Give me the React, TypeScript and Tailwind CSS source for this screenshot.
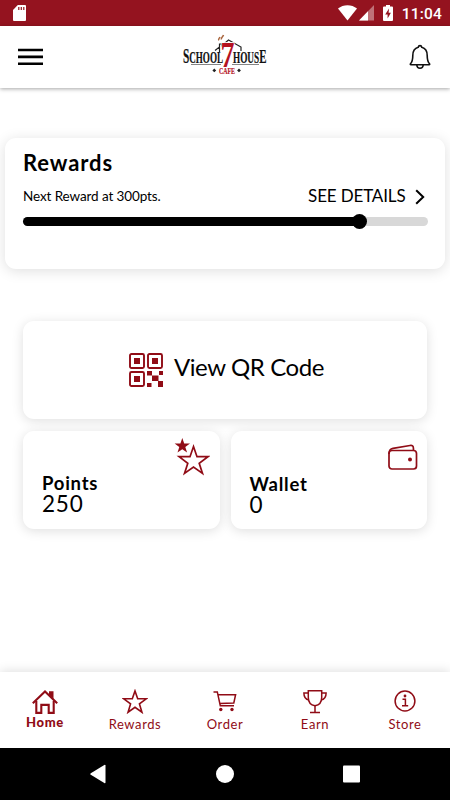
import React from 'react';
import { clsx } from 'clsx';

const STAR = 'M12 1.8 14.5 9H22.4L16.1 13.7 18.4 21.4 12 16.8 5.6 21.4 7.9 13.7 1.6 9H9.5Z';

function StatusBar() {
  return (
    <div className="flex h-[26px] shrink-0 items-center bg-[#94131f] pl-[13px] pr-[8px] text-white">
      <svg width="13" height="16" viewBox="0 0 13 16" fill="none">
        <path d="M4.8 0H12a1 1 0 0 1 1 1v14a1 1 0 0 1-1 1H1a1 1 0 0 1-1-1V5Z" fill="#fff" />
        <path d="M5.8 2v3M8.3 2v3M10.8 2v3" stroke="#94131f" strokeWidth="1.2" />
      </svg>
      <svg className="ml-auto" width="19" height="16" viewBox="0 0 19 16" fill="#fff">
        <path d="M0 3.6C5.2-1 13.8-1 19 3.6L9.5 15.5Z" />
      </svg>
      <svg className="ml-[2px]" width="15" height="16" viewBox="0 0 15 16">
        <path d="M15 0V15.5H0Z" fill="#fff" opacity="0.4" />
        <path d="M9 6.2V15.5H0Z" fill="#fff" />
      </svg>
      <svg className="ml-[9px]" width="10" height="16" viewBox="0 0 10 16">
        <path d="M3 0h4v1.600h2a1 1 0 0 1 1 1V15a1 1 0 0 1-1 1H1a1 1 0 0 1-1-1V2.600a1 1 0 0 1 1-1h2Z" fill="#fff" />
        <path d="M6 3.5 2.2 9.4H4.6V13.5L7.9 7.8H5.6Z" fill="#94131f" />
      </svg>
      <span className="ml-[9px] mt-[3px] font-[Roboto] text-[15.5px] font-medium leading-none tracking-[0.2px]">11:04</span>
    </div>
  );
}

function Logo() {
  return (
    <svg width="86" height="42" viewBox="0 0 86 42" fill="none" fontFamily="'Liberation Serif', serif" fontWeight="700">
      <path d="M33 16.5 37.5 13V10H40V11.5L46.5 6 59 13V17M37.5 13V18" stroke="#222" strokeWidth="1.2" />
      <path d="M39.5 5.5C38.5 3.8 41 3 41.5 1M36.8 6.3C36 4.8 37.5 4.3 38 3" stroke="#a8643c" strokeWidth="1.5" />
      <path d="M9 30.5H39M50 30.5H77" stroke="#777" strokeWidth="0.9" />
      <text x="1" y="29" fontSize="16" fill="#111" stroke="#111" strokeWidth="0.2" textLength="40" lengthAdjust="spacingAndGlyphs">
        <tspan fontSize="20">S</tspan>CHOOL
      </text>
      <text x="51" y="29" fontSize="16" fill="#111" stroke="#111" strokeWidth="0.2" textLength="33.5" lengthAdjust="spacingAndGlyphs">
        HOUS<tspan fontSize="19">E</tspan>
      </text>
      <text x="38.5" y="33.300" fontSize="35" fill="#b5121f" stroke="#fff" strokeWidth="1.6" paintOrder="stroke" textLength="14" lengthAdjust="spacingAndGlyphs">7</text>
      <text x="37" y="39.500" fontSize="9" fill="#b5121f" stroke="#b5121f" strokeWidth="0.2" textLength="16" lengthAdjust="spacingAndGlyphs">CAFE</text>
      <path d="m32.3 34.5 1.9 1.9-1.9 1.9-1.9-1.9ZM57 34.500l1.900 1.900-1.900 1.900-1.900-1.900Z" fill="#222" />
    </svg>
  );
}

function Header() {
  return (
    <header className="flex h-[62px] shrink-0 items-center justify-between bg-white pl-[18px] pr-[19px] shadow-[0_1px_4px_rgba(0,0,0,0.35)]">
      <svg width="25" height="18" viewBox="0 0 25 18" fill="#000">
        <path d="M0 .7h25v2.600H0zM0 7.600h25v2.600H0zM0 14.500h25v2.600H0z" />
      </svg>
      <div className="mt-[-4px] pr-[2px]">
        <Logo />
      </div>
      <svg width="22" height="26" viewBox="0 0 22 26" fill="none" stroke="#111" strokeWidth="1.6">
        <path d="M1.500 19.800c2-2 2.300-3.800 2.300-8.300 0-4.300 2-7.300 5.400-8.200.2-1 .8-1.700 1.800-1.700s1.600.7 1.800 1.700c3.400.9 5.400 3.900 5.400 8.200 0 4.500.3 6.300 2.300 8.300.4.500.2 1-.4 1H1.900c-.6 0-.8-.5-.4-1Z" />
        <path d="M7.800 21c.2 2.200 1.500 3.300 3.200 3.300s3-1.100 3.200-3.300" />
      </svg>
    </header>
  );
}

function RewardsCard() {
  return (
    <section className="mx-[5px] mt-[50px] h-[131px] rounded-[11px] bg-white pl-[18px] pr-[17.5px] pt-[12px] shadow-[0_2px_14px_rgba(0,0,0,0.13)]">
      <h2 className="text-[22px] font-bold leading-[25px] tracking-[0.9px]">Rewards</h2>
      <div className="mt-[10px] flex h-[22px] items-center justify-between">
        <span className="text-[13.5px] leading-[22px] tracking-[-0.1px]">Next Reward at 300pts.</span>
        <button className="flex items-center gap-[9px] text-[17px] leading-[22px] tracking-[-0.15px]">
          SEE DETAILS
          <svg className="mr-[3px] mt-[2px]" width="10" height="16" viewBox="0 0 10 16" fill="none" stroke="#000" strokeWidth="2">
            <path d="M1.200 1.200 8.200 8 1.200 14.800" />
          </svg>
        </button>
      </div>
      <div className="mt-[10px] flex h-[9px] items-center rounded-full bg-[#d8d8d8]">
        <div className="h-[9px] w-[337px] rounded-full bg-black" />
        <div className="-ml-[8px] size-[15px] rounded-full bg-black" />
      </div>
    </section>
  );
}

function QrIcon() {
  return (
    <svg width="34" height="34" viewBox="0 0 34 34" fill="none">
      <g stroke="#900c16" strokeWidth="1.9">
        <rect x="1" y="1" width="14" height="14" rx="1.5" />
        <rect x="19" y="1" width="14" height="14" rx="1.5" />
        <rect x="1" y="19" width="14" height="14" rx="1.5" />
      </g>
      <path d="M5 5h6v6H5zM23 5h6v6h-6zM5 23h6v6H5zM18 18h5v4.500h-5zM30 18h4v4h-4zM23 22.500h6.500V28H23zM18 30h4.500v4H18zM29 28h5v6h-5z" fill="#900c16" />
    </svg>
  );
}

interface StatCardProps {
  label: string;
  value: string;
  icon: React.ReactNode;
  className?: string;
}

function StatCard({ label, value, icon, className }: StatCardProps) {
  return (
    <div className="relative flex h-[98px] flex-1 flex-col rounded-[11px] bg-white pl-[19px] shadow-[0_2px_12px_rgba(0,0,0,0.13)]">
      <div className="absolute right-[10px] top-[7px]">{icon}</div>
      <div className={clsx('flex flex-col', className)}>
        <span className="text-[18.5px] font-bold leading-[21px] tracking-[0.75px]">{label}</span>
        <span className="-mt-px text-[22.5px] leading-[21px] tracking-[0.8px]">{value}</span>
      </div>
    </div>
  );
}

const pointsIcon = (
  <svg width="36" height="38" viewBox="0 0 36 38" fill="none">
    <path d="M8.300 0 10.200 5.600H16L11.300 9 13.100 14.600 8.300 11.200 3.500 14.600 5.300 9 .6 5.600H6.400Z" fill="#900c16" />
    <path d="M19.500 8.500 23 18.700H33.900L25.200 25.200 28.500 35.400 19.500 29.100 10.500 35.400 13.800 25.200 5.100 18.700H16Z" stroke="#900c16" strokeWidth="1.7" />
  </svg>
);

const walletIcon = (
  <svg className="-mr-px mt-[5px]" width="30" height="28" viewBox="0 0 30 28" fill="none" stroke="#900c16" strokeWidth="1.7">
    <rect x="1" y="7.500" width="27.500" height="18.500" rx="3" />
    <path d="M1 11C1 7 2 5.800 5 5.300L22 2.500c2.500-.3 3.200.5 3.400 2.500L25.500 7.500" />
    <circle cx="22" cy="16.500" r="2" fill="#900c16" stroke="none" />
  </svg>
);

const tabs = [
  {
    id: 'home',
    label: 'Home',
    icon: (
      <svg width="26" height="24" viewBox="0 0 26 24" fill="none" stroke="#900c16" strokeWidth="2.1">
        <path d="M.8 13.200 13 1.500 25.200 13.200" />
        <path d="M4.300 11V22.900H9.300V14.900H16.700V22.900H21.700V11" />
        <path d="M17 1.200h4.500V9L17 4.700Z" fill="#900c16" stroke="none" />
      </svg>
    ),
  },
  {
    id: 'rewards',
    label: 'Rewards',
    icon: (
      <svg className="-mt-[2px]" width="26" height="25" viewBox="0 0 24 23" fill="none" stroke="#900c16" strokeWidth="1.5">
        <path d={STAR} />
      </svg>
    ),
  },
  {
    id: 'order',
    label: 'Order',
    icon: (
      <svg className="-mt-[2px]" width="24" height="22" viewBox="0 0 24 22" fill="none" stroke="#900c16" strokeWidth="1.5">
        <path d="M.5 1.900H4.300L7.300 15.700H21M5 4.700H22.600L20.800 13 6.800 13.500" />
        <circle cx="7.800" cy="19.500" r="1.700" fill="#900c16" stroke="none" />
        <circle cx="19" cy="19.500" r="1.700" fill="#900c16" stroke="none" />
      </svg>
    ),
  },
  {
    id: 'earn',
    label: 'Earn',
    icon: (
      <svg className="-mt-[2px]" width="24" height="25" viewBox="0 0 24 25" fill="none" stroke="#900c16" strokeWidth="1.5">
        <path d="M5.300 1.700H18.700V8.500C18.700 13.500 15.500 16.200 12 16.800 8.500 16.200 5.300 13.500 5.300 8.500Z" />
        <path d="M5.300 4H.9C.9 8.500 2.500 10.500 6 11M18.700 4H23.100C23.100 8.500 21.500 10.500 18 11M12 16.800V23.300M7 23.500H17" />
      </svg>
    ),
  },
  {
    id: 'store',
    label: 'Store',
    icon: (
      <svg className="-mt-[2px]" width="22" height="22" viewBox="0 0 22 22" fill="none" stroke="#900c16" strokeWidth="1.5">
        <circle cx="11" cy="11" r="9.900" />
        <path d="M8.500 9.300H11.400V15.500M8 15.700H14.200" />
        <circle cx="11" cy="6" r="1.400" fill="#900c16" stroke="none" />
      </svg>
    ),
  },
];

function TabBar({ activeTab }: { activeTab: string }) {
  return (
    <nav className="grid h-[76px] shrink-0 grid-cols-5 bg-white shadow-[0_-1px_10px_rgba(0,0,0,0.13)]">
      {tabs.map((tab) => (
        <button key={tab.id} className="flex flex-col items-center pt-[17px] text-[#900c16]">
          <span className="flex h-[26px] items-center">{tab.icon}</span>
          <span
            className={clsx(
              'text-[13px] leading-[16px]',
              activeTab === tab.id ? '-mt-px font-black tracking-[0.7px]' : 'mt-px tracking-[0.6px]'
            )}
          >
            {tab.label}
          </span>
        </button>
      ))}
    </nav>
  );
}

function SystemNav() {
  return (
    <div className="flex h-[52px] shrink-0 items-center bg-black pl-[90px] pr-[90px]">
      <svg className="w-full" height="20" viewBox="0 0 270 20" fill="#fff">
        <path d="M15.500 1.500V18.500a.8.800 0 0 1-1.200.6L.8 10.800a1 1 0 0 1 0-1.600L14.300.9a.8.800 0 0 1 1.200.6Z" />
        <circle cx="135" cy="10" r="9" />
        <rect x="253" y="1.500" width="17" height="17" rx="1" />
      </svg>
    </div>
  );
}

export default function App() {
  return (
    <div className="flex h-[800px] w-[450px] flex-col overflow-hidden bg-white font-[Lato,sans-serif] text-black">
      <StatusBar />
      <Header />
      <main className="flex-1">
        <RewardsCard />
        <div className="mx-[23px] mt-[52px] flex flex-col gap-[12px]">
          <button className="flex h-[98px] items-center justify-center gap-[11px] rounded-[11px] bg-white pl-[3px] shadow-[0_2px_12px_rgba(0,0,0,0.13)]">
            <QrIcon />
            <span className="-mt-[7px] text-[24px] leading-[30px] tracking-[-0.4px]">View QR Code</span>
          </button>
          <div className="flex gap-[11px]">
            <StatCard label="Points" value="250" icon={pointsIcon} className="pt-[42px]" />
            <StatCard label="Wallet" value="0" icon={walletIcon} className="pt-[43px]" />
          </div>
        </div>
      </main>
      <TabBar activeTab="home" />
      <SystemNav />
    </div>
  );
}
